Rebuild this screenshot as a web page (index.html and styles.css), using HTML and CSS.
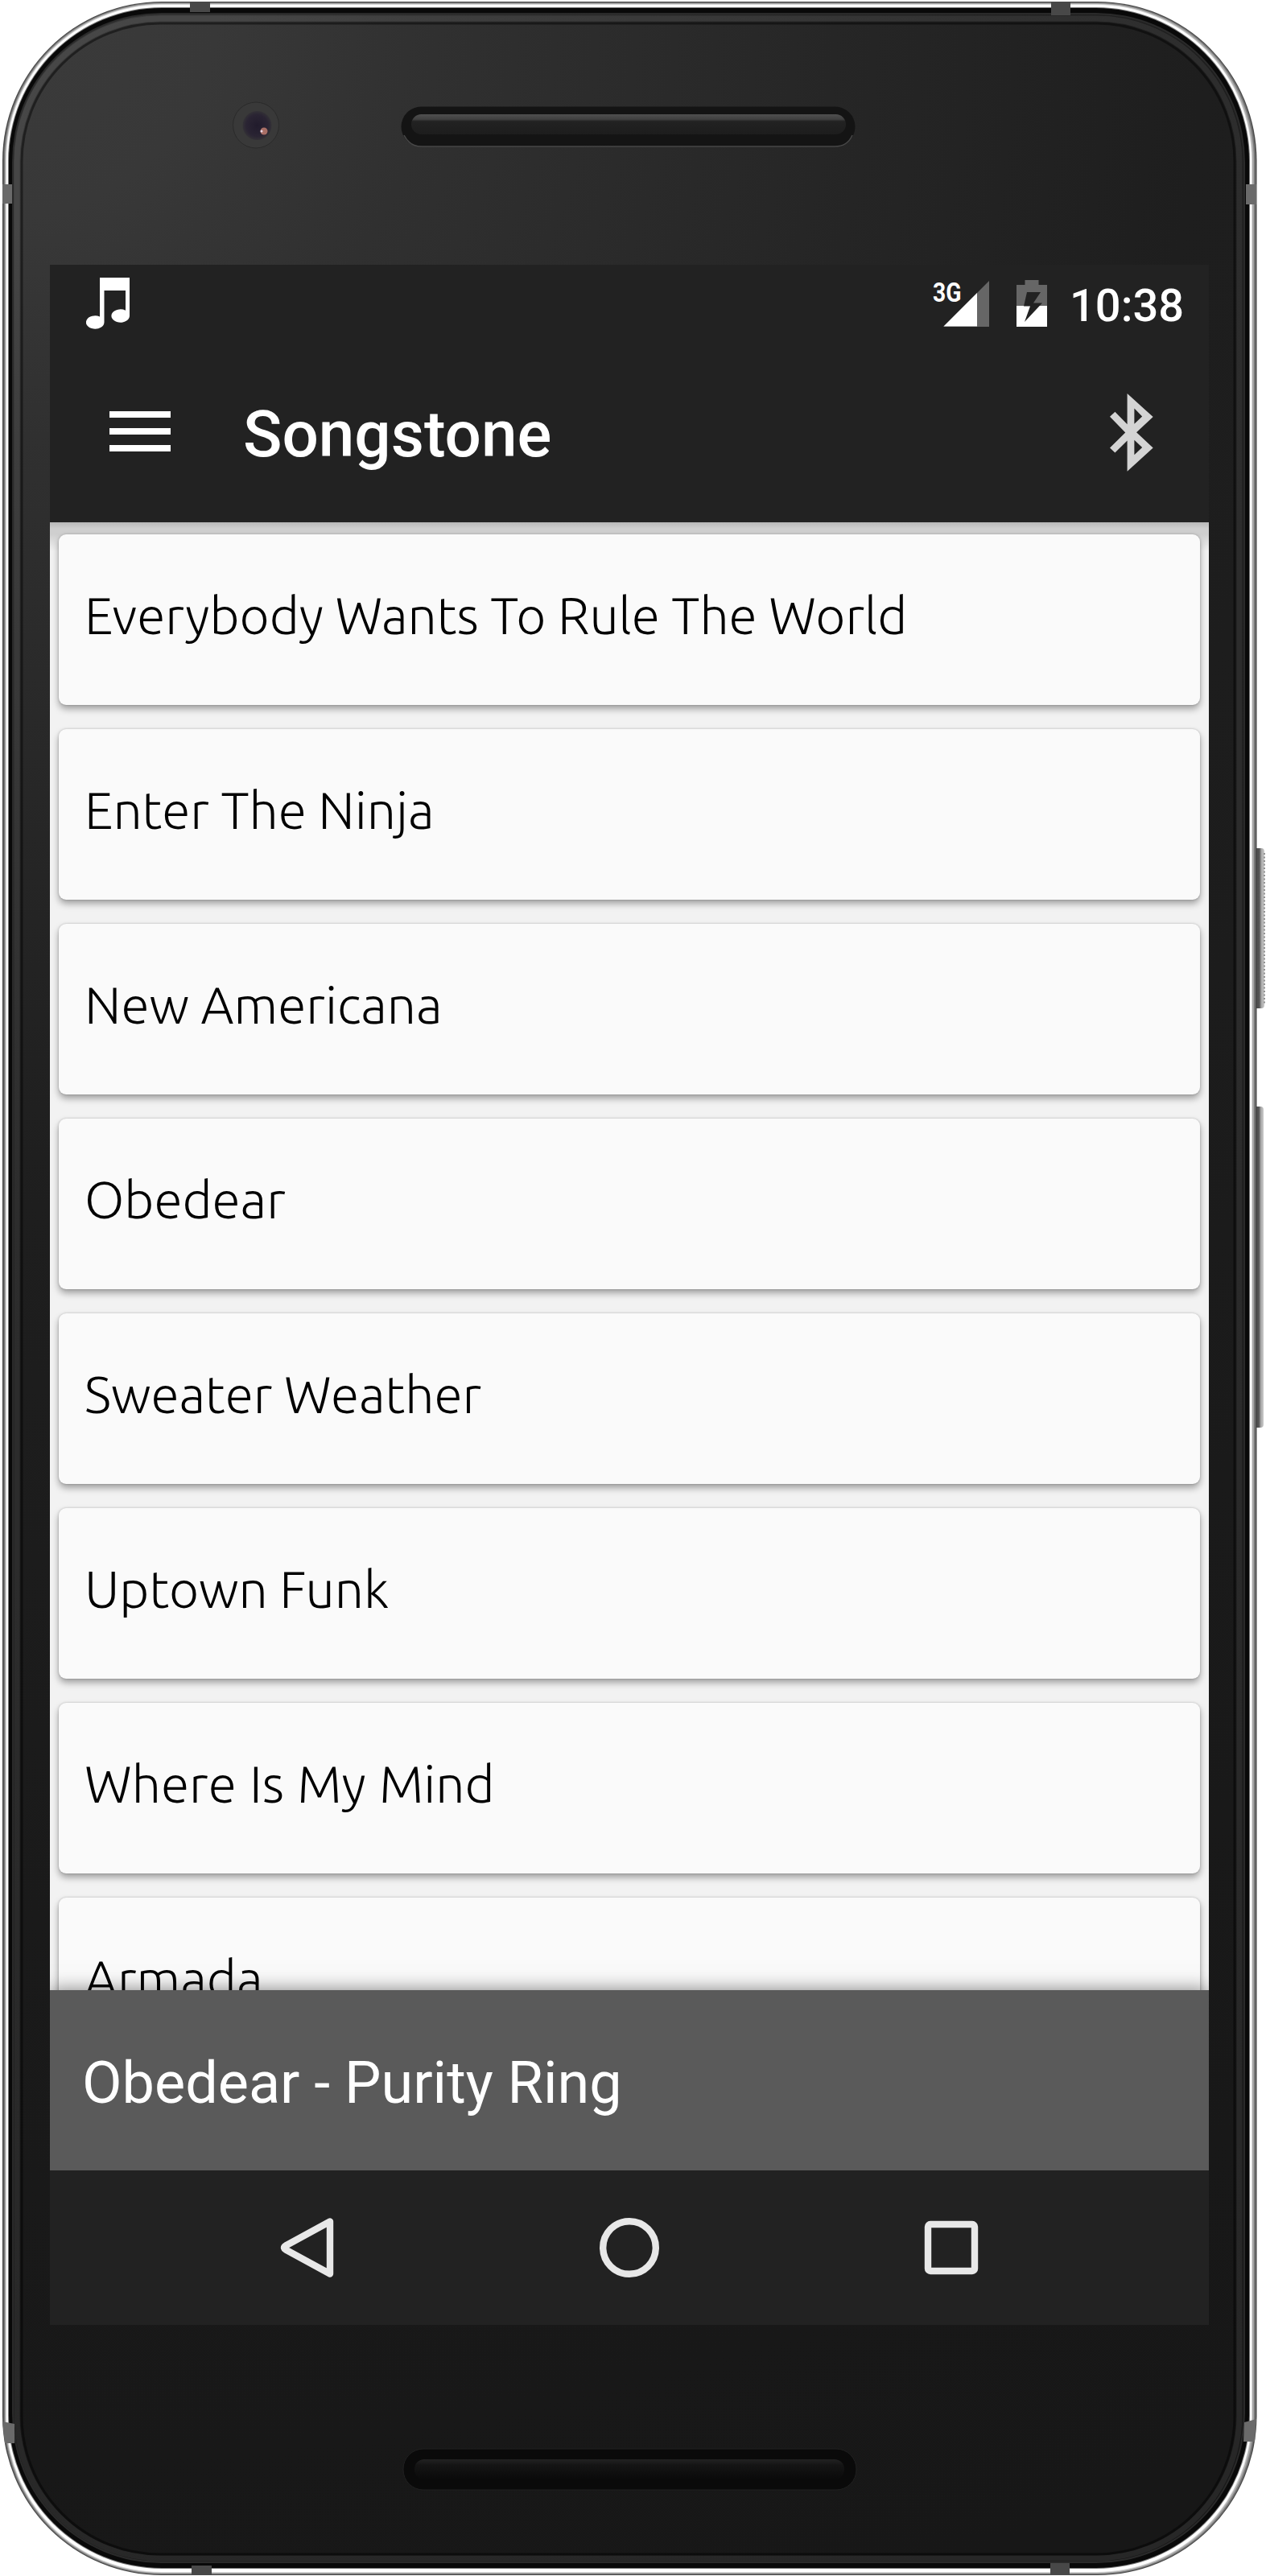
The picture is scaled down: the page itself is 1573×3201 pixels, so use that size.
FILE: index.html
```html
<!DOCTYPE html>
<html lang="en">
<head>
<meta charset="utf-8">
<title>Songstone</title>
<link rel="stylesheet" href="styles.css">
</head>
<body>
<div class="phone">
  <svg class="case" width="1573" height="3201" viewBox="0 0 1573 3201" aria-hidden="true">
    <defs>
      <radialGradient id="body" gradientUnits="userSpaceOnUse" cx="0" cy="0" r="3400">
        <stop offset="0" stop-color="#3b3b3b"/><stop offset=".08" stop-color="#383838"/>
        <stop offset=".16" stop-color="#303030"/><stop offset=".32" stop-color="#252525"/>
        <stop offset=".44" stop-color="#1e1e1e"/><stop offset=".7" stop-color="#1a1a1a"/>
        <stop offset="1" stop-color="#171717"/>
      </radialGradient>
      <linearGradient id="button" x1="0" x2="1" y1="0" y2="0">
        <stop offset="0" stop-color="#3c3c3c"/><stop offset=".55" stop-color="#555"/>
        <stop offset=".75" stop-color="#aaa"/><stop offset="1" stop-color="#ccc"/>
      </linearGradient>
      <linearGradient id="slot" x1="0" x2="0" y1="0" y2="1">
        <stop offset="0" stop-color="#505050"/><stop offset=".25" stop-color="#404040"/>
        <stop offset=".35" stop-color="#222"/><stop offset="1" stop-color="#1d1d1d"/>
      </linearGradient>
      <linearGradient id="slot-dim" x1="0" x2="0" y1="0" y2="1">
        <stop offset="0" stop-color="#222"/><stop offset=".3" stop-color="#141414"/>
        <stop offset="1" stop-color="#0a0a0a"/>
      </linearGradient>
      <radialGradient id="lens"><stop offset="0" stop-color="#211b2c"/><stop offset=".75" stop-color="#2a2433"/><stop offset="1" stop-color="#333136"/></radialGradient>
    </defs>
    <rect x="1557" y="1054" width="14" height="199" rx="4" fill="url(#button)"/>
    <path d="M1571 1060V1248" stroke="#777" stroke-width="1.5" stroke-dasharray="2 2.5"/>
    <rect x="1557" y="1375" width="13" height="399" rx="4" fill="url(#button)"/>
    <rect x="3" y="2" width="1558.500" height="3198" rx="198" fill="#4a4a4a"/>
    <rect x="4.500" y="3" width="1555.500" height="3196" rx="196.500" fill="#777"/>
    <rect x="6" y="4" width="1552" height="3194" rx="195" fill="#a8a8a8"/>
    <rect x="7" y="5" width="1549" height="3192" rx="194" fill="#d8d8d8"/>
    <rect x="8" y="6" width="1547" height="3190" rx="193" fill="#fff"/>
    <rect x="10" y="9" width="1543" height="3183" rx="191" fill="#777"/>
    <rect x="11" y="10" width="1541" height="3181" rx="190" fill="#090909"/>
    <rect x="15" y="16" width="1532" height="3169" rx="185" fill="#2a2a2a"/>
    <rect x="17" y="18" width="1528" height="3165" rx="183" fill="url(#body)"/>
    <rect x="21" y="23" width="1519" height="3156" rx="178" fill="none" stroke="#fff" stroke-opacity=".07" stroke-width="7"/>
    <rect x="27" y="29" width="1507" height="3145" rx="172" fill="none" stroke="#000" stroke-opacity=".45" stroke-width="3"/>
    <g fill="#484848">
      <path d="M236 2h25v13h-25zM1306 3h24v16h-24zM238 3188h25v12h-25zM1305 3185h24v14h-24z"/>
      <path fill="#6a6a6a" d="M3 229h12v24H3zM1548 229h13v25h-13zM3 3009l15 3v24H6zM1546 3010l15-4-2 28h-14z"/>
    </g>
    <circle cx="318" cy="155.500" r="28.500" fill="#393939" stroke="#2a2a2a"/>
    <circle cx="319.500" cy="156" r="18" fill="url(#lens)"/>
    <circle cx="328" cy="163" r="4.500" fill="#a96f66"/><circle cx="325" cy="163" r="1.500" fill="#e8d8e8"/>
    <rect x="498.500" y="132.500" width="564" height="50" rx="25" fill="#141414"/>
    <path d="M502 168q7 14 22 14h513q16 0 22-14" fill="none" stroke="#484848" stroke-width="1.500"/>
    <rect x="511" y="142" width="540" height="25" rx="12.500" fill="url(#slot)"/>
    <rect x="501" y="3043" width="563" height="51" rx="25" fill="#0a0a0a" stroke="#202020"/>
    <rect x="515" y="3056" width="534" height="25" rx="12" fill="url(#slot-dim)"/>
  </svg>

  <main class="screen">
    <header class="status">
      <svg width="54" height="64" viewBox="0 0 54 64" fill="#fff" aria-hidden="true"><path d="M17 0h37v47.500a11.300 8.200 0 1 1-5-6.800V16H22.500v39.500A11.300 8.200 0 1 1 17 48.500z"/></svg>
      <div class="status-end">
        <div class="signal"><span class="network">3G</span>
          <svg width="57" height="58" viewBox="0 0 57 58" aria-hidden="true"><path d="M57 0v57H0z" fill="#666"/><path d="M42 15v41.500H.5z" fill="#fff"/></svg>
        </div>
        <svg class="battery" width="38" height="58" viewBox="0 0 38 58" aria-hidden="true"><path d="M10.500 0h17v6H38v26H0V6h10.500z" fill="#666"/><path d="M0 32h38v26H0z" fill="#fff"/><path d="M13 15h17l-9 13.500h11L10 52l7-19.500H9z" fill="#222"/></svg>
        <time class="clock">10:38</time>
      </div>
    </header>
    <div class="appbar">
      <svg class="menu" width="76" height="50" viewBox="0 0 76 50" fill="#fff" aria-hidden="true"><path d="M0 0h76v8H0zM0 21h76v8H0zM0 42h76v8H0z"/></svg>
      <h1 class="title">Songstone</h1>
      <svg class="bluetooth" width="54" height="97" viewBox="0 0 160 290" preserveAspectRatio="none" fill="#d4d4d4" fill-rule="evenodd" aria-hidden="true"><path d="M64 0l95 87-61 57 61 58-95 87V175l-45 45-19-18 57-57L0 86l19-18 45 46zM90 55v58l29-28zM90 173v55l29-28z"/></svg>
    </div>
    <ul class="songs">
      <li class="song">Everybody Wants To Rule The World</li>
      <li class="song">Enter The Ninja</li>
      <li class="song">New Americana</li>
      <li class="song">Obedear</li>
      <li class="song">Sweater Weather</li>
      <li class="song">Uptown Funk</li>
      <li class="song unkerned">Where Is My Mind</li>
      <li class="song">Armada</li>
    </ul>
    <div class="playing">Obedear - Purity Ring</div>
    <nav class="keys">
      <svg width="80" height="80" viewBox="0 0 80 80" aria-label="Back"><path d="M68 7.500v65L13 42.500q-4-2.500 0-5z"/></svg>
      <svg width="80" height="80" viewBox="0 0 80 80" aria-label="Home"><circle cx="40" cy="40" r="32.800"/></svg>
      <svg width="80" height="80" viewBox="0 0 80 80" aria-label="Recents"><rect x="11" y="11" width="58" height="58" rx="3"/></svg>
    </nav>
  </main>
</div>
</body>
</html>
```
FILE: styles.css
```css
* { box-sizing: border-box; }
body { margin: 0; background: #fff; font-family: Roboto, "Liberation Sans", sans-serif; }
.phone { position: relative; width: 1573px; height: 3201px; padding: 329px 71px 312px 62px; overflow: hidden; }
.case { position: absolute; left: 0; top: 0; }
.screen { position: relative; display: flex; flex-direction: column; width: 1440px; height: 2560px; background: #222; color: #fff; overflow: hidden; }
svg { display: block; flex: none; }

.status { display: flex; align-items: flex-start; height: 96px; padding: 16px 34px 0 45px; justify-content: space-between; }
.status-end { display: flex; align-items: flex-start; }
.signal { display: flex; align-items: flex-start; padding-top: 4px; }
.network { width: 13px; margin-top: -3px; font-size: 34px; line-height: 34px; font-weight: 700; white-space: nowrap; transform: scaleX(.83); transform-origin: 0 0; }
.signal svg { position: relative; }
.battery { margin: 3px 0 0 34px; }
.clock { width: 139px; margin: 5px 0 0 28px; font-size: 56px; line-height: 60px; font-weight: 500; white-space: nowrap; }

.appbar { display: flex; align-items: center; height: 224px; padding: 0 69px 0 74px; }
.menu { margin-bottom: 2px; }
.title { margin: 6px 0 0 90px; font-size: 80px; line-height: 96px; font-weight: 500; }
.bluetooth { margin-left: auto; }

.songs { display: flex; flex-direction: column; gap: 30px; flex: 1; min-height: 0; margin: 0; padding: 15px 11px 0; list-style: none; overflow: hidden; background: linear-gradient(#b8b8b8, #cfcfcf 8px, #cfcfcf 15px, #f2f2f2 36px); }
.song { display: flex; align-items: center; flex: none; height: 212px; padding: 0 32px 12px; border-radius: 9px; background: #fafafa; color: #000; box-shadow: 0 5px 9px rgba(0,0,0,.34), 0 0 3px rgba(0,0,0,.2); font-family: Ubuntu, "Noto Sans", sans-serif; font-weight: 300; font-size: 64px; line-height: 80px; white-space: nowrap; }
.unkerned { word-spacing: 1.700px; }

.playing { position: relative; display: flex; align-items: center; height: 224px; padding: 8px 40px 0; background: #5a5a5a; box-shadow: 0 0 22px rgba(0,0,0,.5); font-size: 72px; line-height: 84px; white-space: nowrap; }

.keys { position: relative; display: flex; justify-content: space-between; align-items: center; height: 192px; padding: 0 280px; background: #222; }
.keys svg { fill: none; stroke: #e8e8e8; stroke-width: 8.400; stroke-linejoin: round; }
```
